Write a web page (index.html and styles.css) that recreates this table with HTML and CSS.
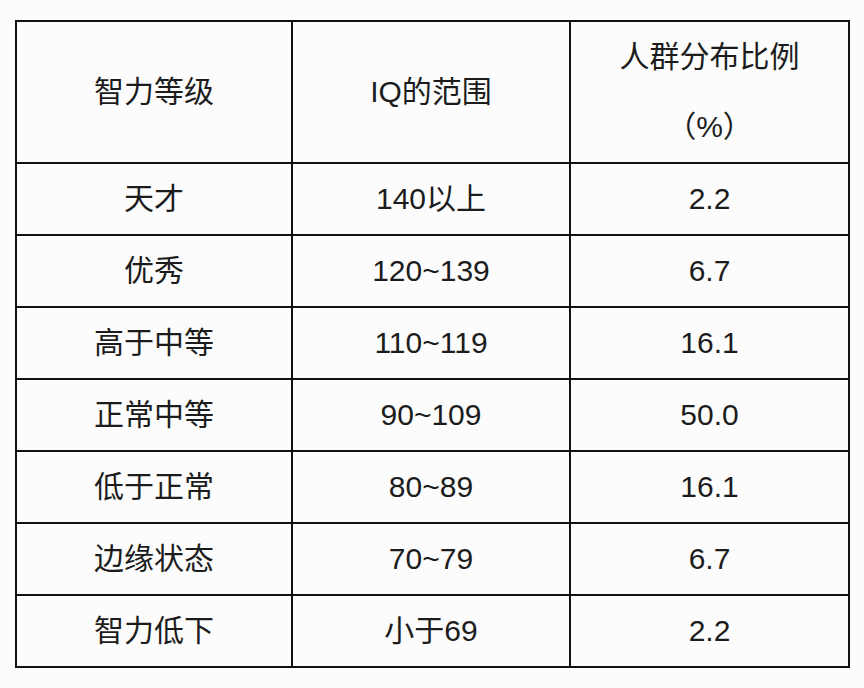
FILE: index.html
```html
<!DOCTYPE html>
<html lang="zh">
<head>
<meta charset="utf-8">
<title>智力等级</title>
<link rel="stylesheet" href="styles.css">
</head>
<body>
<table class="iq-table">
  <colgroup>
    <col class="c1">
    <col class="c2">
    <col class="c3">
  </colgroup>
  <thead>
    <tr class="head">
      <th>智力等级</th>
      <th>IQ的范围</th>
      <th><span class="line">人群分布比例</span><span class="line">（%）</span></th>
    </tr>
  </thead>
  <tbody>
    <tr><td>天才</td><td>140以上</td><td>2.2</td></tr>
    <tr><td>优秀</td><td>120~139</td><td>6.7</td></tr>
    <tr><td>高于中等</td><td>110~119</td><td>16.1</td></tr>
    <tr><td>正常中等</td><td>90~109</td><td>50.0</td></tr>
    <tr><td>低于正常</td><td>80~89</td><td>16.1</td></tr>
    <tr><td>边缘状态</td><td>70~79</td><td>6.7</td></tr>
    <tr><td>智力低下</td><td>小于69</td><td>2.2</td></tr>
  </tbody>
</table>
</body>
</html>
```
FILE: styles.css
```css
html, body {
  margin: 0;
  padding: 0;
  background: #fcfcfc;
}
body {
  padding: 20px 0 0 15px;
  font-family: "Liberation Sans", "Noto Sans CJK SC", sans-serif;
  color: #1c1c1c;
}
.iq-table {
  border-collapse: collapse;
  table-layout: fixed;
  width: 833px;
}
.c1 { width: 276px; }
.c2 { width: 278px; }
.c3 { width: 279px; }
.iq-table th,
.iq-table td {
  border: 2px solid #111;
  padding: 0;
  text-align: center;
  vertical-align: middle;
  font-size: 30px;
  font-weight: normal;
  height: 70px;
  line-height: 36px;
}
.iq-table .head th {
  height: 140px;
}
.line {
  display: block;
  line-height: 70px;
}
```
